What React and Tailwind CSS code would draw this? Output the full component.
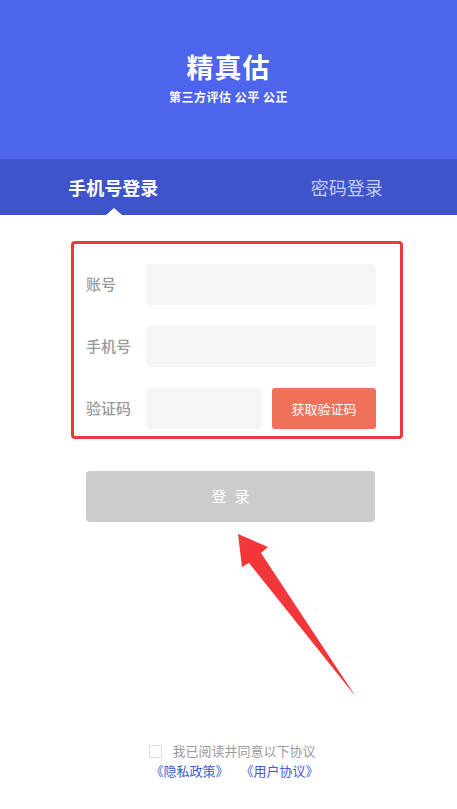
import { useState } from "react";

const font = { fontFamily: '"Noto Sans CJK SC", "Noto Sans", sans-serif' };

function Field({ label, children }) {
  return (
    <div className="flex items-center h-[41px]">
      <span className="w-[60px] text-[15px] font-medium text-[#999999]">{label}</span>
      {children}
    </div>
  );
}

export default function App() {
  const [tab, setTab] = useState(0);
  const [agree, setAgree] = useState(false);

  return (
    <div className="relative min-h-[809px] flex flex-col bg-white" style={font}>
      <div className="h-[159px] bg-[#4d65ec] flex flex-col items-center pt-[50px]">
        <h1 className="text-[27px] leading-[34px] font-bold text-white tracking-[1px]">精真估</h1>
        <p className="mt-[5px] text-[12px] leading-[16px] font-bold text-white tracking-[0.5px]">
          第三方评估 公平 公正
        </p>
      </div>

      <div className="h-[56px] bg-[#3f54cb] grid grid-cols-2">
        {["手机号登录", "密码登录"].map((t, i) => (
          <button
            key={t}
            onClick={() => setTab(i)}
            className={
              "relative flex items-center justify-center text-[18px] " +
              (tab === i ? "font-bold text-white" : "text-[#c3ccf3]")
            }
          >
            <span className={i === 0 ? "-ml-[2px]" : "ml-[8px]"}>{t}</span>
            {tab === i && (
              <span className="absolute bottom-0 left-1/2 -translate-x-1/2 w-0 h-0 border-x-[8px] border-x-transparent border-b-[7px] border-b-white" />
            )}
          </button>
        ))}
      </div>

      <div className="mx-[71px] mr-[54px] mt-[26px] border-[3px] border-[#e83a3e] rounded-[4px] pl-[12px] pr-[24px] pt-[20px] pb-[7px] flex flex-col gap-[21px]">
        <Field label="账号">
          <div className="flex-1 h-full bg-[#f5f5f5] rounded-[4px]" />
        </Field>
        <Field label="手机号">
          <div className="flex-1 h-full bg-[#f5f5f5] rounded-[4px]" />
        </Field>
        <Field label="验证码">
          <div className="w-[116px] h-full bg-[#f5f5f5] rounded-[4px]" />
          <button className="ml-[10px] flex-1 h-full bg-[#f07159] rounded-[3px] text-white text-[13px]">
            获取验证码
          </button>
        </Field>
      </div>

      <button className="mx-[86px] mr-[82px] mt-[32px] h-[51px] bg-[#cccccc] rounded-[4px] text-white text-[15px] tracking-[8px] pl-[8px]">
        登录
      </button>

      <div className="mt-auto pb-[28px] flex flex-col items-center text-[13px]">
        <label className="h-[20px] flex items-center gap-[10px] text-[#9a9a9a] ml-[8px]">
          <input
            type="checkbox"
            checked={agree}
            onChange={e => setAgree(e.target.checked)}
            className="appearance-none w-[13px] h-[13px] border border-[#dddddd] bg-white"
          />
          我已阅读并同意以下协议
        </label>
        <div className="h-[20px] flex items-center gap-[12px] text-[#3d5bd0] ml-[12px]">
          <span>《隐私政策》</span>
          <span>《用户协议》</span>
        </div>
      </div>

      <svg className="absolute left-0 top-0 pointer-events-none" width="457" height="809">
        <polygon
          points="238,534 268,547 261,553 356,697 249,563 242,567"
          fill="#f3363a"
        />
      </svg>
    </div>
  );
}
